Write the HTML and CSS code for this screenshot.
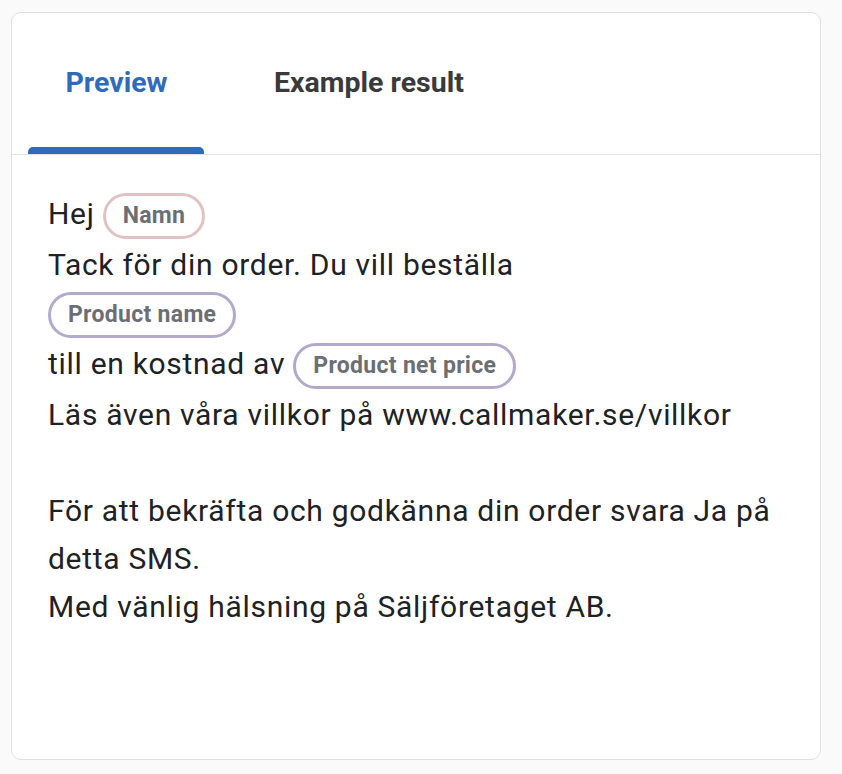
FILE: index.html
```html
<!DOCTYPE html>
<html lang="sv">
<head>
<meta charset="utf-8">
<link rel="stylesheet" href="styles.css">
</head>
<body>
<div class="card">
  <div class="tabs">
    <div class="tab tab-active">
      <span class="tab-label">Preview</span>
      <span class="tab-indicator"></span>
    </div>
    <div class="tab">
      <span class="tab-label">Example result</span>
      <span class="tab-indicator"></span>
    </div>
  </div>
  <div class="content">
    <div class="line">Hej <span class="chip chip-pink">Namn</span></div>
    <div class="line">Tack för din order. Du vill beställa</div>
    <div class="line"><span class="chip chip-purple">Product name</span></div>
    <div class="line">till en kostnad av <span class="chip chip-purple">Product net price</span></div>
    <div class="line">Läs även våra villkor på www.callmaker.se/villkor</div>
    <div class="line">&nbsp;</div>
    <div class="line">För att bekräfta och godkänna din order svara Ja på detta SMS.</div>
    <div class="line">Med vänlig hälsning på Säljföretaget AB.</div>
  </div>
</div>
</body>
</html>
```

FILE: styles.css
```css
html, body {
  margin: 0;
  padding: 0;
  background: #fafafa;
}
body {
  padding: 12px 21px 14px 11px;
  font-family: Roboto, "Noto Sans", sans-serif;
}
.card {
  box-sizing: border-box;
  width: 810px;
  height: 748px;
  background: #ffffff;
  border: 1.5px solid #e0e0e0;
  border-radius: 10px;
}
.tabs {
  display: flex;
  height: 141px;
  padding-left: 16px;
  border-bottom: 1.5px solid #e2e2e2;
  gap: 32px;
}
.tab {
  display: flex;
  flex-direction: column;
  align-items: stretch;
}
.tab-label {
  flex: 1;
  display: flex;
  align-items: center;
  justify-content: center;
  padding: 4px 37px 0 38px;
  font-size: 28.5px;
  font-weight: 700;
  color: #3a3a3a;
}
.tab-indicator {
  height: 7px;
  border-radius: 5px 5px 0 0;
  background: transparent;
}
.tab-active {
  width: 176px;
}
.tab-active .tab-label {
  color: #2f6bbd;
}
.tab-active .tab-indicator {
  background: #2f6bbd;
}
.content {
  padding: 35px 36px 0 36px;
  font-size: 30px;
  letter-spacing: 0.7px;
  line-height: 48px;
  color: #202124;
}
.line {
  min-height: 48px;
}
.chip {
  display: inline-block;
  box-sizing: border-box;
  height: 46px;
  margin: 2px 0;
  line-height: 40px;
  padding: 0 17px;
  border: 3px solid #ddbfc3;
  border-radius: 23px;
  font-size: 23px;
  letter-spacing: 0.3px;
  font-weight: 700;
  color: #6b6f73;
  vertical-align: middle;
}
.chip-pink {
  border-color: #e0c2c5;
}
.chip-purple {
  border-color: #b2a9cb;
}
```
